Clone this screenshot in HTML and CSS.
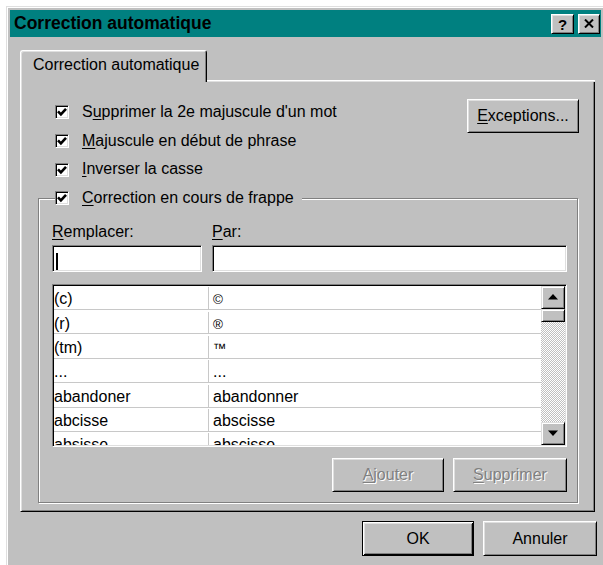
FILE: index.html
```html
<!DOCTYPE html>
<html lang="fr">
<head>
<meta charset="utf-8">
<title>Correction automatique</title>
<link rel="stylesheet" href="styles.css">
</head>
<body>
<div class="window">
  <div class="titlebar">
    <span class="title">Correction automatique</span>
    <div class="caption-buttons">
      <span class="cbtn help">?</span>
      <span class="cbtn close">
        <svg width="10" height="9" viewBox="0 0 10 9"><path d="M1 0.5 L9 8.5 M9 0.5 L1 8.5" stroke="#000" stroke-width="2" fill="none"/></svg>
      </span>
    </div>
  </div>

  <div class="client">
    <div class="tabstrip">
      <div class="tab">Correction automatique</div>
      <div class="tab-fill"></div>
    </div>

    <div class="panel">
      <div class="top">
        <div class="checks">
          <div class="check">
            <span class="box"><svg width="10" height="10" viewBox="0 0 10 10"><polyline points="1,4.4 3.9,7.4 9,1.8" stroke="#000" stroke-width="2.6" fill="none"/></svg></span>
            <span>S<u>u</u>pprimer la 2e majuscule d'un mot</span>
          </div>
          <div class="check">
            <span class="box"><svg width="10" height="10" viewBox="0 0 10 10"><polyline points="1,4.4 3.9,7.4 9,1.8" stroke="#000" stroke-width="2.6" fill="none"/></svg></span>
            <span><u>M</u>ajuscule en début de phrase</span>
          </div>
          <div class="check">
            <span class="box"><svg width="10" height="10" viewBox="0 0 10 10"><polyline points="1,4.4 3.9,7.4 9,1.8" stroke="#000" stroke-width="2.6" fill="none"/></svg></span>
            <span><u>I</u>nverser la casse</span>
          </div>
        </div>
        <button class="btn exceptions"><u>E</u>xceptions...</button>
      </div>

      <div class="group">
        <div class="check group-title">
          <span class="box"><svg width="10" height="10" viewBox="0 0 10 10"><polyline points="1,4.4 3.9,7.4 9,1.8" stroke="#000" stroke-width="2.6" fill="none"/></svg></span>
          <span><u>C</u>orrection en cours de frappe</span>
        </div>

        <div class="fields">
          <div class="field replace">
            <div class="label"><u>R</u>emplacer:</div>
            <div class="input"><span class="caret"></span></div>
          </div>
          <div class="field with">
            <div class="label"><u>P</u>ar:</div>
            <div class="input"></div>
          </div>
        </div>

        <div class="list">
          <div class="rows">
            <div class="row"><span class="c1">(c)</span><span class="c2"><span class="sym">©</span></span></div>
            <div class="row"><span class="c1">(r)</span><span class="c2"><span class="sym">®</span></span></div>
            <div class="row"><span class="c1">(tm)</span><span class="c2"><span class="sym">™</span></span></div>
            <div class="row"><span class="c1">...</span><span class="c2">...</span></div>
            <div class="row"><span class="c1">abandoner</span><span class="c2">abandonner</span></div>
            <div class="row"><span class="c1">abcisse</span><span class="c2">abscisse</span></div>
            <div class="row"><span class="c1">absisse</span><span class="c2">abscisse</span></div>
          </div>
          <div class="scrollbar">
            <div class="sbtn">
              <svg width="10" height="6" viewBox="0 0 10 6"><polygon points="5,0 10,5.5 0,5.5" fill="#000"/></svg>
            </div>
            <div class="thumb"></div>
            <div class="track"></div>
            <div class="sbtn">
              <svg width="10" height="6" viewBox="0 0 10 6"><polygon points="0,0.5 10,0.5 5,6" fill="#000"/></svg>
            </div>
          </div>
        </div>

        <div class="actions">
          <button class="btn disabled add"><u>A</u>jouter</button>
          <button class="btn disabled remove"><u>S</u>upprimer</button>
        </div>
      </div>
    </div>

    <div class="footer">
      <button class="btn default ok">OK</button>
      <button class="btn cancel">Annuler</button>
    </div>
  </div>
</div>
</body>
</html>
```

FILE: styles.css
```css
* {
  box-sizing: border-box;
}

html,
body {
  margin: 0;
  padding: 0;
  background: #fff;
  overflow: hidden;
}

body {
  width: 603px;
  height: 565px;
  font-family: "Liberation Sans", Arial, sans-serif;
  font-size: 16px;
  color: #000;
}

u {
  text-decoration-thickness: 1px;
  text-underline-offset: 2px;
}

/* Dialog frame: two-pixel raised bevel and a grey margin */
.window {
  margin: 6px 0 0 6px;
  width: 599px;
  height: 575px;
  background: #c0c0c0;
  border: 1px solid;
  border-color: #dfdfdf #000 #000 #dfdfdf;
  box-shadow: inset 1px 1px #fff, inset -1px -1px #808080;
  padding: 3px;
}

.titlebar {
  height: 27px;
  background: #008080;
  display: flex;
  align-items: center;
  justify-content: space-between;
  padding: 0 1px 0 4px;
}

.title {
  font-weight: bold;
  font-size: 17.5px;
  color: #000;
  white-space: nowrap;
}

.caption-buttons {
  display: flex;
  gap: 4px;
}

.cbtn {
  height: 20px;
  display: flex;
  align-items: center;
  justify-content: center;
  background: #c0c0c0;
  border: 1px solid;
  border-color: #fff #000 #000 #fff;
  box-shadow: inset 1px 1px #dfdfdf, inset -1px -1px #808080;
}

.cbtn.help {
  width: 23px;
  font-weight: bold;
  font-size: 15px;
  line-height: 1;
  padding-top: 1px;
}

.cbtn.close {
  width: 22px;
}

/* Client area */
.client {
  padding: 13px 0 0 10px;
}

.tabstrip {
  display: flex;
  height: 32px;
  width: 575px;
}

.tab {
  width: 187px;
  height: 32px;
  border: 1px solid;
  border-bottom: 0;
  border-color: #fff #000 transparent #fff;
  border-radius: 3px 3px 0 0;
  box-shadow: inset 1px 1px #dfdfdf, inset -1px 0 #808080;
  padding: 4.5px 0 0 12px;
  line-height: 18px;
  white-space: nowrap;
}

.tab-fill {
  flex: 1;
  border-bottom: 1px solid #dfdfdf;
  box-shadow: inset 0 -1px #fff;
}

.panel {
  width: 575px;
  height: 430px;
  border: 1px solid;
  border-top: 0;
  border-color: transparent #000 #000 #fff;
  box-shadow: inset 1px 0 #dfdfdf, inset -1px -1px #808080;
  padding-top: 16px;
}

.top {
  display: flex;
  align-items: flex-start;
}

.checks {
  padding-left: 34px;
}

.check {
  display: flex;
  align-items: center;
  gap: 13px;
  height: 28.67px;
  line-height: 28.67px;
  white-space: nowrap;
}

.box {
  width: 14px;
  height: 14px;
  flex: none;
  display: flex;
  align-items: center;
  justify-content: center;
  background: #fff;
  border: 1px solid;
  border-color: #808080 #fff #fff #808080;
  box-shadow: inset 1px 1px #000, inset -1px -1px #dfdfdf;
}

/* Push buttons */
.btn {
  font-family: inherit;
  font-size: 16px;
  color: #000;
  height: 34px;
  padding: 0;
  margin: 0;
  background: #c0c0c0;
  border: 1px solid;
  border-color: #fff #000 #000 #fff;
  box-shadow: inset 1px 1px #dfdfdf, inset -1px -1px #808080;
  white-space: nowrap;
}

.btn.disabled {
  color: #808080;
  text-shadow: 1px 1px #fff;
}

.btn.default {
  border-color: #000;
  box-shadow: inset 1px 1px #fff, inset -1px -1px #000, inset 2px 2px #dfdfdf, inset -2px -2px #808080;
}

.exceptions {
  width: 112px;
  margin: 1px 15px 0 auto;
}

/* Group box with its check box caption */
.group {
  margin: 14px 16px 0 17px;
  height: 305px;
  border: 1px solid #808080;
  box-shadow: 1px 1px #fff, inset 1px 1px #fff;
  padding: 0 10px 0 13px;
  display: flex;
  flex-direction: column;
}

.group-title {
  align-self: flex-start;
  margin: -15px 0 0 3px;
  padding-right: 8px;
  background: #c0c0c0;
}

.fields {
  display: flex;
  gap: 10px;
  margin-top: 10px;
}

.field.replace {
  width: 150px;
}

.field.with {
  flex: 1;
}

.label {
  line-height: 18px;
  white-space: nowrap;
}

.input {
  margin-top: 4px;
  height: 27px;
  background: #fff;
  border: 1px solid;
  border-color: #808080 #fff #fff #808080;
  box-shadow: inset 1px 1px #000, inset -1px -1px #dfdfdf;
  padding: 7px 0 0 3px;
}

.caret {
  display: block;
  width: 2px;
  height: 17px;
  background: #000;
}

/* Replacement list */
.list {
  margin-top: 12px;
  height: 163px;
  display: flex;
  background: #fff;
  border: 1px solid;
  border-color: #808080 #fff #fff #808080;
  box-shadow: inset 1px 1px #000, inset -1px -1px #dfdfdf;
  padding: 1px;
}

.rows {
  flex: 1;
  overflow: hidden;
}

.row {
  display: flex;
  height: 24.4px;
  border-bottom: 1px solid #c8c8c8;
  padding-top: 1.5px;
  line-height: 23.4px;
  white-space: nowrap;
}

.c1 {
  width: 155px;
  flex: none;
  border-right: 1px solid #c8c8c8;
}

.c2 {
  flex: 1;
  padding-left: 4px;
}

.sym {
  font-size: 13.5px;
}

.scrollbar {
  width: 24px;
  flex: none;
  display: flex;
  flex-direction: column;
}

.sbtn,
.thumb {
  background: #c0c0c0;
  border: 1px solid;
  border-color: #dfdfdf #000 #000 #dfdfdf;
  box-shadow: inset 1px 1px #fff, inset -1px -1px #808080;
}

.sbtn {
  height: 23px;
  flex: none;
  display: flex;
  align-items: center;
  justify-content: center;
}

.thumb {
  height: 13px;
  flex: none;
}

.track {
  flex: 1;
  background: repeating-conic-gradient(#fff 0 25%, #c0c0c0 0 50%) 0 0 / 2px 2px;
}

.actions {
  display: flex;
  justify-content: flex-end;
  gap: 9px;
  margin-top: 11px;
}

.add {
  width: 112px;
}

.remove {
  width: 114px;
}

/* Dialog buttons */
.footer {
  display: flex;
  justify-content: flex-end;
  gap: 9px;
  margin-top: 9px;
  padding-right: 4px;
}

.footer .btn {
  height: 35px;
}

.ok {
  width: 112px;
}

.cancel {
  width: 114px;
}
```
